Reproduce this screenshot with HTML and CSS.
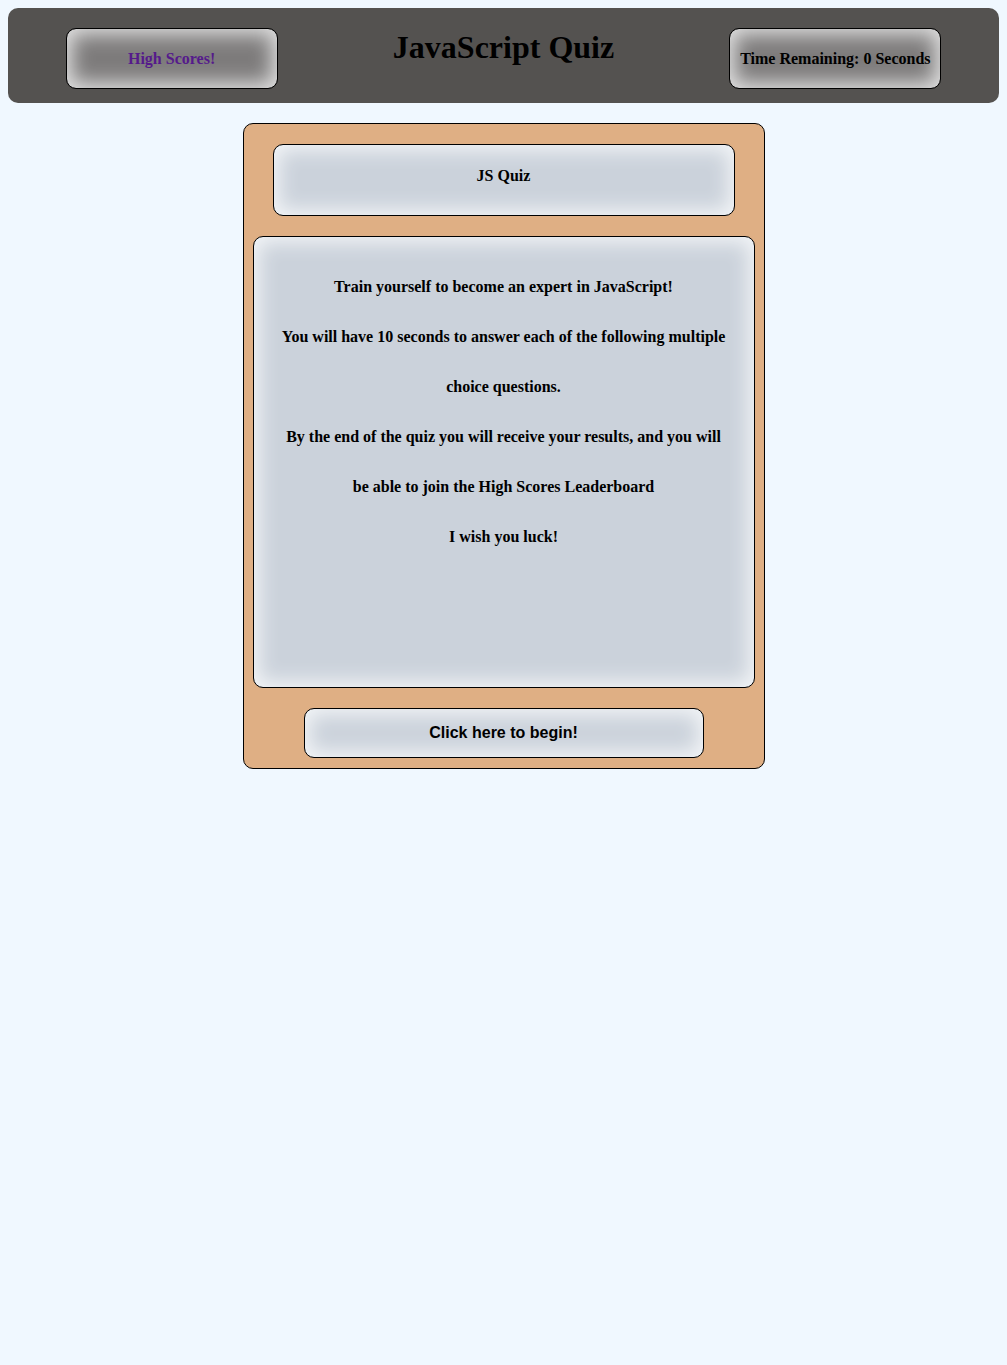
FILE: index.html
```html
<!DOCTYPE html>
<html lang="en">
<head>
<meta charset="utf-8">
<title>JavaScript Quiz</title>
<link rel="stylesheet" href="styles.css">
</head>
<body>
<header class="topbar">
  <div class="pill"><a class="pill-link" href="#">High Scores!</a></div>
  <h1 class="title">JavaScript Quiz</h1>
  <div class="pill">Time Remaining: 0 Seconds</div>
</header>
<main class="card">
  <div class="card-title">JS Quiz</div>
  <div class="card-body">
    <p>Train yourself to become an expert in JavaScript!</p>
    <p>You will have 10 seconds to answer each of the following multiple choice questions.</p>
    <p>By the end of the quiz you will receive your results, and you will be able to join the High Scores Leaderboard</p>
    <p>I wish you luck!</p>
  </div>
  <button class="start">Click here to begin!</button>
</main>
</body>
</html>
```
FILE: styles.css
```css
body {
  margin: 8px;
  background: #f0f8ff;
  font-family: "Liberation Serif", "Times New Roman", serif;
  color: #000;
}
.topbar {
  height: 95px;
  box-sizing: border-box;
  padding-top: 20px;
  background: #545250;
  border-radius: 10px;
  display: flex;
  justify-content: space-around;
  align-items: flex-start;
}
.pill {
  width: 212px;
  height: 61px;
  box-sizing: border-box;
  border: 1px solid #000;
  border-radius: 10px;
  background: #7d7b7b;
  box-shadow: inset 0 0 20px 5px #e4e4e4;
  display: flex;
  align-items: center;
  justify-content: center;
  font-weight: bold;
  font-size: 16px;
  white-space: nowrap;
}
.pill-link {
  color: #551a8b;
  text-decoration: none;
}
.title {
  margin: 1px 0 0;
  font-size: 32px;
  line-height: 37px;
  font-weight: bold;
}
.card {
  width: 522px;
  box-sizing: border-box;
  margin: 20px auto 0;
  padding: 20px 10px 10px;
  background: #dfaf84;
  border: 1px solid #000;
  border-radius: 10px;
  display: flex;
  flex-direction: column;
  align-items: center;
  gap: 20px;
}
.card-title {
  width: 462px;
  height: 72px;
  box-sizing: border-box;
  border: 1px solid #000;
  border-radius: 10px;
  background: #cbd2db;
  box-shadow: inset 0 0 20px 5px #f4f6f8;
  display: flex;
  align-items: center;
  justify-content: center;
  font-weight: bold;
  font-size: 16px;
  padding-bottom: 8px;
}
.card-body {
  width: 502px;
  height: 452px;
  box-sizing: border-box;
  border: 1px solid #000;
  border-radius: 10px;
  background: #cbd2db;
  box-shadow: inset 0 0 20px 5px #f4f6f8;
  padding: 25px 25px;
  text-align: center;
  font-weight: bold;
  font-size: 16px;
}
.card-body p {
  margin: 0;
  line-height: 50px;
}
.start {
  width: 400px;
  height: 50px;
  box-sizing: border-box;
  border: 1px solid #000;
  border-radius: 10px;
  background: #cbd2db;
  box-shadow: inset 0 0 20px 5px #f4f6f8;
  font-family: "Liberation Sans", Arial, sans-serif;
  font-weight: bold;
  font-size: 16px;
  color: #000;
  padding: 0;
}
```
